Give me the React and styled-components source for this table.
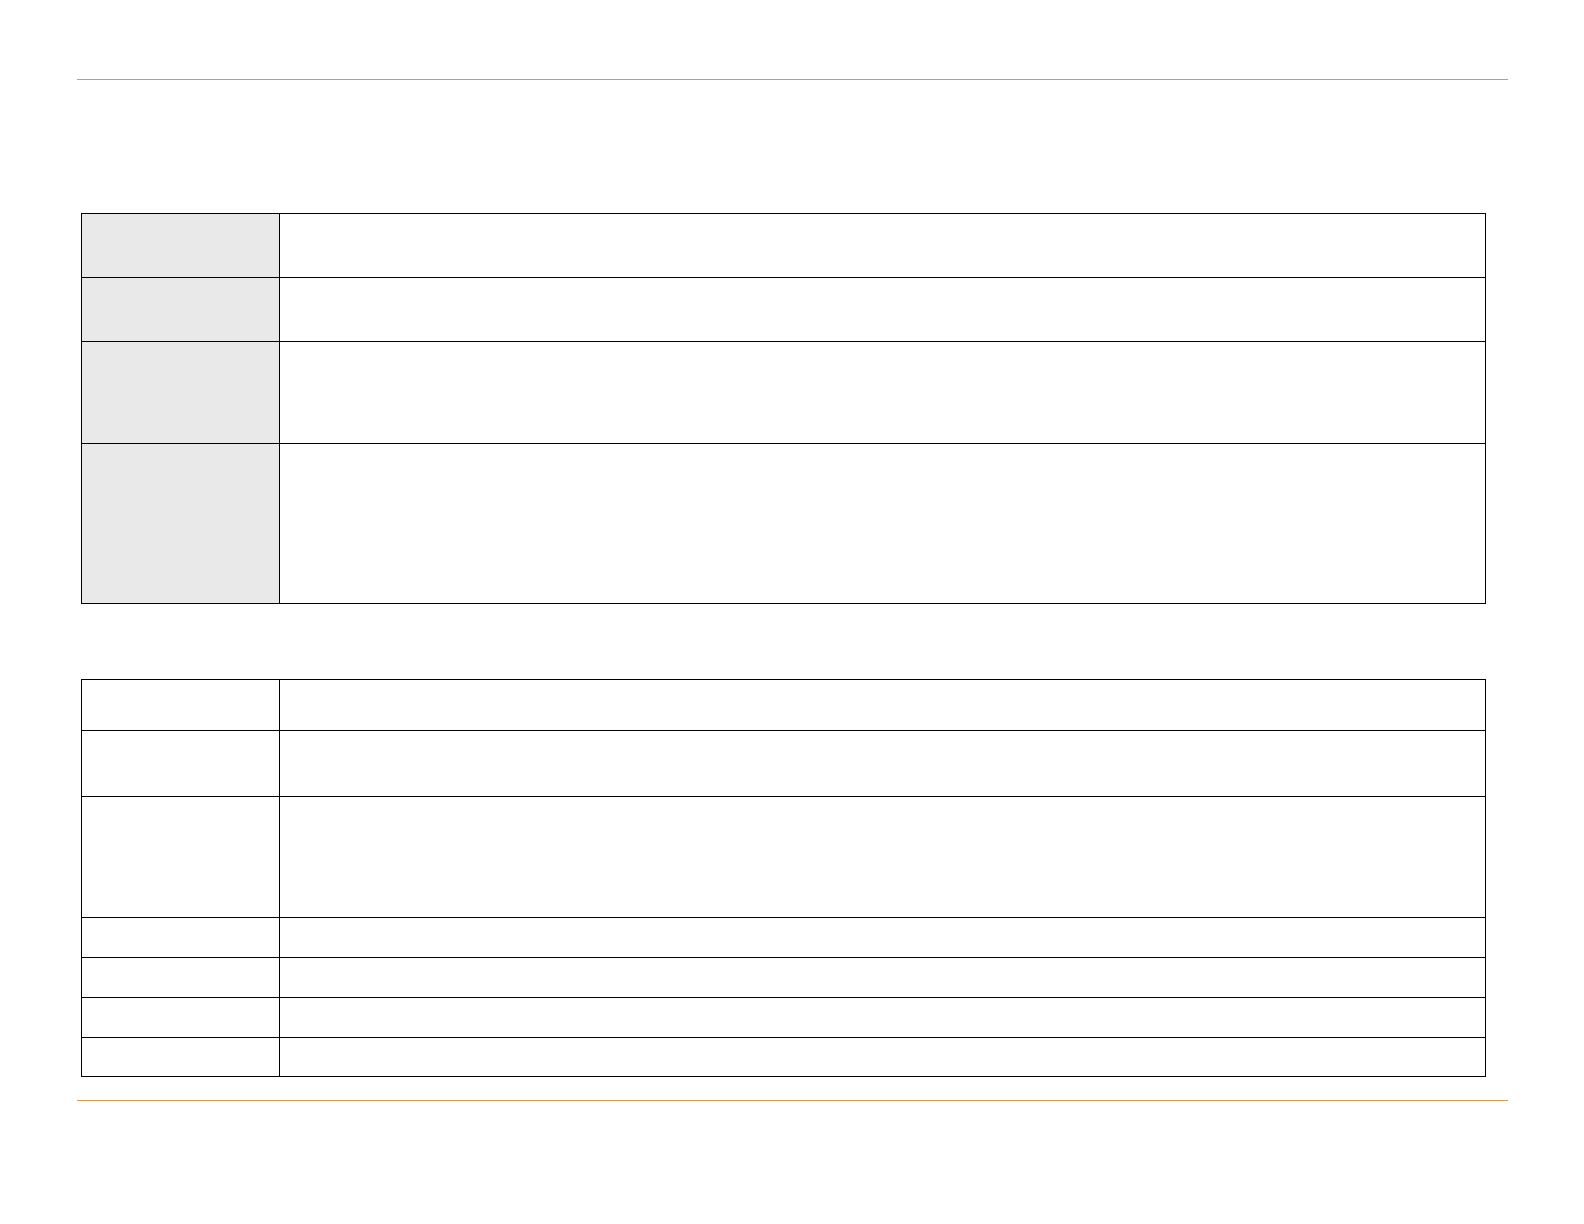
import React from 'react';
import styled, { createGlobalStyle } from 'styled-components';

const GlobalStyle = createGlobalStyle`
  html, body {
    margin: 0;
    padding: 0;
    background: #ffffff;
    font-family: "Liberation Sans", Arial, sans-serif;
  }
`;

const tableOne = [
  { height: 64 },
  { height: 64 },
  { height: 102 },
  { height: 160 },
];

const tableTwo = [
  { height: 51 },
  { height: 66 },
  { height: 121 },
  { height: 40 },
  { height: 40 },
  { height: 40 },
  { height: 39 },
];

export default function App() {
  return (
    <>
      <GlobalStyle />
      <Page>
        <Rule />
        <Content>
          <InfoTable $top={133}>
            {tableOne.map((row, i) => (
              <React.Fragment key={i}>
                <LabelCell $h={row.height} $shaded />
                <ValueCell $h={row.height} />
              </React.Fragment>
            ))}
          </InfoTable>
          <InfoTable $top={75}>
            {tableTwo.map((row, i) => (
              <React.Fragment key={i}>
                <LabelCell $h={row.height} />
                <ValueCell $h={row.height} />
              </React.Fragment>
            ))}
          </InfoTable>
        </Content>
        <Rule $top={23} />
      </Page>
    </>
  );
}

const Page = styled.div`
  width: 1431px;
  margin-left: 77px;
  padding-top: 79px;
  padding-bottom: 120px;
`;

const Rule = styled.hr`
  margin: ${(p) => p.$top || 0}px 0 0;
  border: none;
  height: 1px;
  background: #d39a52;
`;

const Content = styled.div`
  padding: 0 22px 0 4px;
`;

const InfoTable = styled.div`
  margin-top: ${(p) => p.$top}px;
  width: 1405px;
  display: grid;
  grid-template-columns: 198px 1fr;
  border-top: 1px solid #000;
  border-left: 1px solid #000;
  box-sizing: border-box;
`;

const Cell = styled.div`
  box-sizing: border-box;
  height: ${(p) => p.$h}px;
  border-right: 1px solid #000;
  border-bottom: 1px solid #000;
  font-size: 14px;
  color: #000;
`;

const LabelCell = styled(Cell)`
  background: ${(p) => (p.$shaded ? '#e9e9e9' : '#ffffff')};
`;

const ValueCell = styled(Cell)`
  background: #ffffff;
`;
